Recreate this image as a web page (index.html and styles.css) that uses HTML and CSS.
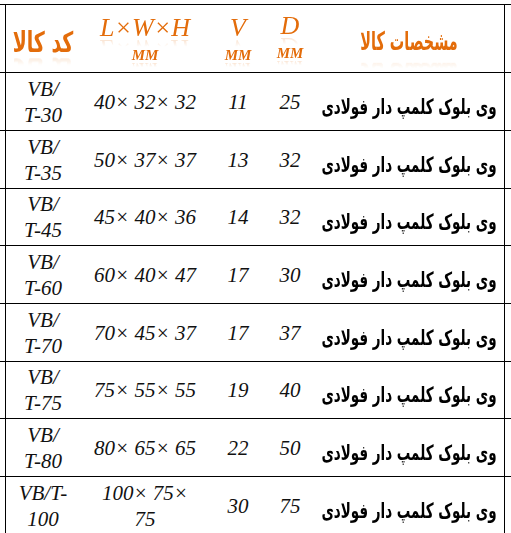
FILE: index.html
```html
<!DOCTYPE html>
<html lang="fa">
<head>
<meta charset="utf-8">
<title>مشخصات کالا</title>
<link rel="stylesheet" href="styles.css">
</head>
<body>
<div class="sheet">
  <div class="row head">
    <div class="ghost"></div>
    <div class="cell code-col"><span class="fa-head code-head" dir="rtl">کد کالا</span></div>
    <div class="cell stack"><span class="lat-head">L×W×H</span><span class="unit">MM</span></div>
    <div class="cell stack"><span class="lat-head">V</span><span class="unit">MM</span></div>
    <div class="cell stack d-col"><span class="lat-head">D</span><span class="unit">MM</span></div>
    <div class="cell name-col"><span class="fa-head name-head" dir="rtl">مشخصات کالا</span></div>
    <div class="ghost"></div>
  </div>

  <div class="row r58">
    <div class="ghost"></div>
    <div class="cell code-col val">VB/<br>T-30</div>
    <div class="cell val">40× 32× 32</div>
    <div class="cell val">11</div>
    <div class="cell val">25</div>
    <div class="cell name-col"><span class="fa-name" dir="rtl">وی بلوک کلمپ دار فولادی</span></div>
    <div class="ghost"></div>
  </div>

  <div class="row r58">
    <div class="ghost"></div>
    <div class="cell code-col val">VB/<br>T-35</div>
    <div class="cell val">50× 37× 37</div>
    <div class="cell val">13</div>
    <div class="cell val">32</div>
    <div class="cell name-col"><span class="fa-name" dir="rtl">وی بلوک کلمپ دار فولادی</span></div>
    <div class="ghost"></div>
  </div>

  <div class="row r57">
    <div class="ghost"></div>
    <div class="cell code-col val">VB/<br>T-45</div>
    <div class="cell val">45× 40× 36</div>
    <div class="cell val">14</div>
    <div class="cell val">32</div>
    <div class="cell name-col"><span class="fa-name" dir="rtl">وی بلوک کلمپ دار فولادی</span></div>
    <div class="ghost"></div>
  </div>

  <div class="row r58">
    <div class="ghost"></div>
    <div class="cell code-col val">VB/<br>T-60</div>
    <div class="cell val">60× 40× 47</div>
    <div class="cell val">17</div>
    <div class="cell val">30</div>
    <div class="cell name-col"><span class="fa-name" dir="rtl">وی بلوک کلمپ دار فولادی</span></div>
    <div class="ghost"></div>
  </div>

  <div class="row r58">
    <div class="ghost"></div>
    <div class="cell code-col val">VB/<br>T-70</div>
    <div class="cell val">70× 45× 37</div>
    <div class="cell val">17</div>
    <div class="cell val">37</div>
    <div class="cell name-col"><span class="fa-name" dir="rtl">وی بلوک کلمپ دار فولادی</span></div>
    <div class="ghost"></div>
  </div>

  <div class="row r57">
    <div class="ghost"></div>
    <div class="cell code-col val">VB/<br>T-75</div>
    <div class="cell val">75× 55× 55</div>
    <div class="cell val">19</div>
    <div class="cell val">40</div>
    <div class="cell name-col"><span class="fa-name" dir="rtl">وی بلوک کلمپ دار فولادی</span></div>
    <div class="ghost"></div>
  </div>

  <div class="row r58">
    <div class="ghost"></div>
    <div class="cell code-col val">VB/<br>T-80</div>
    <div class="cell val">80× 65× 65</div>
    <div class="cell val">22</div>
    <div class="cell val">50</div>
    <div class="cell name-col"><span class="fa-name" dir="rtl">وی بلوک کلمپ دار فولادی</span></div>
    <div class="ghost"></div>
  </div>

  <div class="row r58">
    <div class="ghost"></div>
    <div class="cell code-col val">VB/T-<br>100</div>
    <div class="cell val">100× 75×<br>75</div>
    <div class="cell val">30</div>
    <div class="cell val">75</div>
    <div class="cell name-col"><span class="fa-name" dir="rtl">وی بلوک کلمپ دار فولادی</span></div>
    <div class="ghost"></div>
  </div>
</div>
</body>
</html>
```

FILE: styles.css
```css
html, body {
  margin: 0;
  padding: 0;
  background: #ffffff;
  overflow: hidden;
}

.sheet {
  padding-top: 4px;
  width: 511px;
}

.row {
  display: grid;
  grid-template-columns: 5px 75px 130px 56px 48px 191px 6px;
  border-top: 1px solid #000000;
  box-sizing: border-box;
}

.head { height: 68px; }
.r58 { height: 58px; }
.r57 { height: 57px; }

.cell {
  display: flex;
  align-items: center;
  justify-content: center;
  text-align: center;
  min-width: 0;
  overflow: visible;
}

.row > .code-col {
  border-left: 1px solid #000000;
}

.row > .name-col {
  border-right: 1px solid #000000;
  overflow: hidden;
}

.val {
  font-family: "Liberation Serif", serif;
  font-style: italic;
  font-size: 21px;
  line-height: 26px;
  color: #111111;
}

.stack {
  flex-direction: column;
}

.d-col { margin-top: -4px; }

.lat-head {
  font-family: "Liberation Serif", serif;
  font-style: italic;
  font-size: 26px;
  line-height: 28px;
  color: #e36c0a;
  -webkit-box-reflect: below -8px linear-gradient(transparent 55%, rgba(255, 255, 255, 0.35));
}

.unit {
  font-family: "Liberation Serif", serif;
  font-style: italic;
  font-weight: bold;
  font-size: 15px;
  line-height: 18px;
  margin-top: 4px;
  color: #e36c0a;
  -webkit-box-reflect: below -5px linear-gradient(transparent 55%, rgba(255, 255, 255, 0.35));
}

.fa-head {
  display: inline-block;
  font-family: "DejaVu Sans Condensed", "DejaVu Sans", sans-serif;
  font-weight: bold;
  color: #e36c0a;
  white-space: nowrap;
  -webkit-box-reflect: below -12px linear-gradient(transparent 55%, rgba(255, 255, 255, 0.35));
}

.code-head {
  font-size: 21px;
  line-height: 30px;
  margin-top: 8px;
  transform: scaleY(1.35);
}

.name-head {
  font-size: 16px;
  line-height: 30px;
  margin-top: 6px;
  transform: scaleY(1.6);
}

.fa-name {
  display: inline-block;
  font-family: "DejaVu Sans Condensed", "DejaVu Sans", sans-serif;
  font-weight: bold;
  font-size: 15px;
  line-height: 28px;
  color: #000000;
  white-space: nowrap;
  margin-top: 10px;
  transform: scaleY(1.4);
}

.ghost { min-width: 0; }
```
